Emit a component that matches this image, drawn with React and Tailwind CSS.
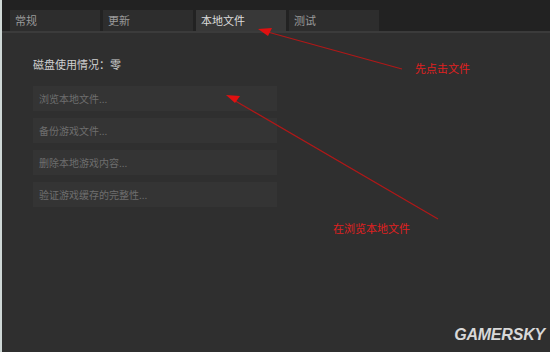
import React from 'react';

const tabs = [
  { label: '常规', active: false },
  { label: '更新', active: false },
  { label: '本地文件', active: true },
  { label: '测试', active: false },
];

const actions = ['浏览本地文件...', '备份游戏文件...', '删除本地游戏内容...', '验证游戏缓存的完整性...'];

const App = () => {
  return (
    <div
      className="relative w-[550px] h-[352px] overflow-hidden bg-[#2f2f2f] border-l-2 border-[#cfd8d6]"
      style={{ fontFamily: '"Noto Sans CJK SC", "Noto Sans", sans-serif' }}
    >
      <div className="h-[10px] bg-[#222222]" />
      <div className="flex h-[21px] gap-[3px] bg-[#222222] pl-[8px]">
        {tabs.map((tab) => (
          <div
            key={tab.label}
            className={`w-[90px] flex items-center pl-[5px] text-[11px] leading-none ${
              tab.active ? 'bg-[#383838] text-[#dcdcdc]' : 'bg-[#2d2d2d] text-[#9a9a9a]'
            }`}
          >
            {tab.label}
          </div>
        ))}
      </div>
      <div className="h-[2px] bg-[#3b3b3b]" />

      <div className="pl-[31px] pt-[26px]">
        <div className="text-[11px] leading-none text-[#cfcfcf]">磁盘使用情况：零</div>
        <div className="mt-[16px] flex flex-col gap-[7px]">
          {actions.map((a) => (
            <div
              key={a}
              className="w-[244px] h-[25px] flex items-center pl-[6px] bg-[#343434] text-[10px] text-[#6e6e6e]"
            >
              {a}
            </div>
          ))}
        </div>
      </div>

      <svg className="absolute inset-0" width="550" height="352" viewBox="0 0 550 352">
        <line x1="262" y1="31" x2="400" y2="69" stroke="#b01818" strokeWidth="1.2" />
        <polygon points="256,29 270,28 266,36" fill="#e01010" />
        <line x1="230" y1="99" x2="436" y2="219" stroke="#b01818" strokeWidth="1.2" />
        <polygon points="224,95 238,96 233,103" fill="#e01010" />
      </svg>

      <div className="absolute left-[413px] top-[63px] text-[11px] leading-none text-[#e02020]">先点击文件</div>
      <div className="absolute left-[331px] top-[223px] text-[11px] leading-none text-[#e02020]">在浏览本地文件</div>
      <div
        className="absolute right-[5px] top-[327px] text-[16px] font-bold italic leading-none tracking-[-0.2px] text-[#d8d8d8]"
        style={{ fontFamily: '"Liberation Sans", Arial, sans-serif' }}
      >
        GAMERSKY
      </div>
    </div>
  );
};

export default App;
